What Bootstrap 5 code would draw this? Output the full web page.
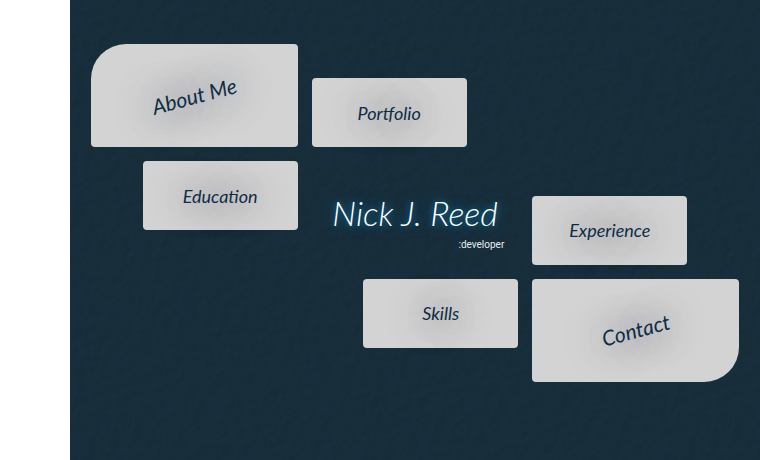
<!DOCTYPE html>
<html lang="en">
<head>
<meta charset="utf-8">
<meta name="viewport" content="width=device-width, initial-scale=1">
<title>Nick J. Reed</title>
<link rel="stylesheet" href="https://cdn.jsdelivr.net/npm/bootstrap@5.3.0/dist/css/bootstrap.min.css">
<style>
  body { padding-left: 70px; background: #fff; }
  .board {
    padding: 44px 21px;
    background: #182e3c url("data:image/svg+xml,%3Csvg xmlns='http://www.w3.org/2000/svg' width='300' height='300'%3E%3Cfilter id='p' x='0' y='0' width='100%25' height='100%25' color-interpolation-filters='sRGB'%3E%3CfeTurbulence type='fractalNoise' baseFrequency='.09 .1' numOctaves='4' seed='8' stitchTiles='stitch'/%3E%3CfeDiffuseLighting surfaceScale='.3' diffuseConstant='1' lighting-color='%231c3646'%3E%3CfeDistantLight azimuth='215' elevation='57'/%3E%3C/feDiffuseLighting%3E%3C/filter%3E%3Crect width='300' height='300' filter='url(%23p)'/%3E%3C/svg%3E");
  }
  .tiles { --bs-gutter-x: 14px; margin-bottom: 14px; }
  .slot { width: 100%; aspect-ratio: 2 / 1; }
  .tile {
    width: 75%;
    aspect-ratio: 9 / 4;
    border-radius: 4px;
    background: #d3d3d3;
    color: #0f2c42;
    font: italic 18px/24px Lato, "Open Sans", sans-serif;
    text-shadow: 0 0 40px #0f2c42;
  }
  .tile:hover { background: #e2e2e2; }
  .tile-lg { width: 100%; aspect-ratio: 2 / 1; font-size: 21px; }
  .tile-lg span { transform: rotate(-15deg); }
  .tile-first { border-top-left-radius: 35px; }
  .tile-last { border-bottom-right-radius: 35px; }
  .brand-name {
    font: italic 300 34px/48px Lato, "Open Sans", sans-serif;
    color: #fff;
    text-shadow: 0 0 6px #126a98, 0 0 14px #126a98;
  }
  .brand-role { font: 10px/16px Roboto, sans-serif; color: #e8eef2; padding-right: 14px; }
</style>
</head>
<body>
<main class="board min-vh-100">
  <div class="row tiles">
    <div class="col-4 d-flex">
      <a href="#about" class="tile tile-lg tile-first d-flex align-items-center justify-content-center text-decoration-none"><span>About Me</span></a>
    </div>
    <div class="col-4 d-flex align-items-end">
      <a href="#portfolio" class="tile d-flex align-items-center justify-content-center text-decoration-none">Portfolio</a>
    </div>
  </div>
  <div class="row tiles">
    <div class="col-4 d-flex align-items-start justify-content-end">
      <a href="#education" class="tile d-flex align-items-center justify-content-center text-decoration-none">Education</a>
    </div>
    <div class="col-4">
      <header class="pt-4 d-flex flex-column">
        <h1 class="brand-name text-center text-nowrap mt-1 mb-0">Nick J. Reed</h1>
        <p class="brand-role text-end mb-0">:developer</p>
      </header>
    </div>
    <div class="col-4">
      <div class="slot d-flex align-items-end">
        <a href="#experience" class="tile d-flex align-items-center justify-content-center text-decoration-none">Experience</a>
      </div>
    </div>
  </div>
  <div class="row tiles">
    <div class="col-4 offset-4 d-flex align-items-start justify-content-end">
      <a href="#skills" class="tile d-flex align-items-center justify-content-center text-decoration-none">Skills</a>
    </div>
    <div class="col-4 d-flex">
      <a href="#contact" class="tile tile-lg tile-last d-flex align-items-center justify-content-center text-decoration-none"><span>Contact</span></a>
    </div>
  </div>
</main>
<script src="https://cdn.jsdelivr.net/npm/bootstrap@5.3.0/dist/js/bootstrap.bundle.min.js"></script>
</body>
</html>
